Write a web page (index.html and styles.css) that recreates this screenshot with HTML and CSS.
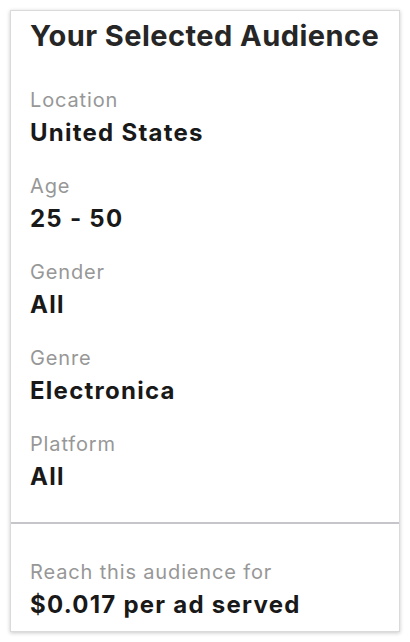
FILE: index.html
```html
<!DOCTYPE html>
<html>
<head>
<meta charset="utf-8">
<link rel="stylesheet" href="styles.css">
</head>
<body>
<div class="card">
  <div class="main">
    <h1 class="title">Your Selected Audience</h1>
    <div class="group"><div class="label">Location</div><div class="value">United States</div></div>
    <div class="group"><div class="label">Age</div><div class="value">25 - 50</div></div>
    <div class="group"><div class="label">Gender</div><div class="value">All</div></div>
    <div class="group"><div class="label">Genre</div><div class="value">Electronica</div></div>
    <div class="group"><div class="label">Platform</div><div class="value">All</div></div>
  </div>
  <div class="footer">
    <div class="label">Reach this audience for</div>
    <div class="value">$0.017 per ad served</div>
  </div>
</div>
</body>
</html>
```
FILE: styles.css
```css
html, body { margin: 0; padding: 0; background: #fff; }
body { padding: 10px; font-family: Inter, "Liberation Sans", sans-serif; }
.card {
  width: 390px;
  height: 622px;
  box-sizing: border-box;
  border: 1px solid #dadada;
  box-shadow: 0 1px 4px rgba(0,0,0,0.22);
  display: flex;
  flex-direction: column;
}
.main { padding: 7px 19px 6px 19px; border-bottom: 2px solid #c6c6ca; }
.title { margin: 0 0 32px 0; font-size: 29px; line-height: 36px; font-weight: 700; color: #262626; letter-spacing: 0.45px; }
.group { margin-bottom: 20px; }
.label { font-size: 20px; line-height: 28px; color: #979797; letter-spacing: 0.85px; }
.value { font-size: 24px; line-height: 38px; font-weight: 700; color: #191919; letter-spacing: 1.25px; }
.footer { flex: 1; padding: 34px 19px 0 19px; }
```
